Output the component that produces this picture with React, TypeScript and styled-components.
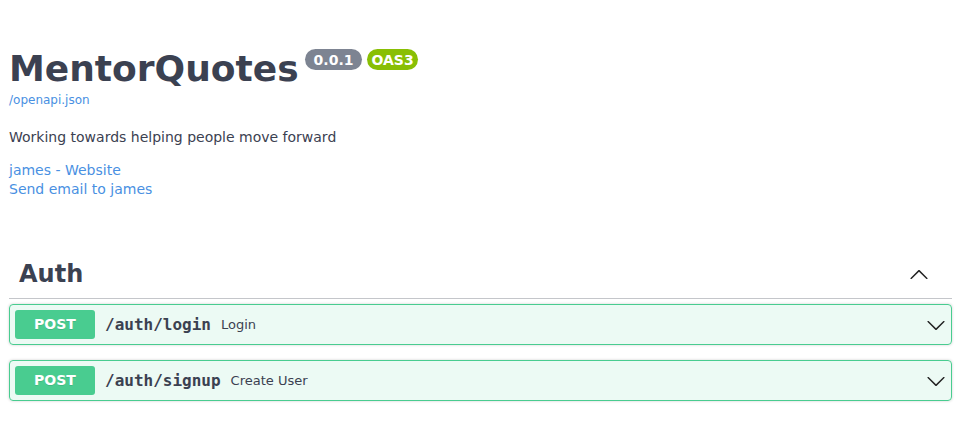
import React from "react";
import styled, { createGlobalStyle } from "styled-components";

const Global = createGlobalStyle`
  html, body { margin: 0; padding: 0; background: #fff; }
  body { font-family: "DejaVu Sans", sans-serif; color: #3b4151; }
  * { box-sizing: border-box; }
`;

const Page = styled.div`
  padding: 0 9px;
`;

const Info = styled.div`
  margin: 48px 0 51px;
`;

const TitleRow = styled.div`
  display: flex;
  align-items: flex-start;
  gap: 5px;
`;

const Title = styled.h2`
  margin: 0 1px 0 0;
  font-size: 36px;
  line-height: 42px;
  font-weight: 700;
  color: #3b4151;
`;

const Badge = styled.span<{ $bg: string; $pad: number }>`
  display: inline-flex;
  align-items: center;
  height: 21px;
  margin-top: 1px;
  padding: 0 ${(p) => p.$pad}px;
  border-radius: 11px;
  background: ${(p) => p.$bg};
  color: #fff;
  font-size: 14px;
  font-weight: 700;
`;

const UrlLink = styled.a`
  display: block;
  margin-top: 3px;
  font-size: 12px;
  line-height: 14px;
  color: #4990e2;
  text-decoration: none;
`;

const Description = styled.p`
  margin: 22px 0 0;
  font-size: 14px;
  line-height: 16px;
  color: #3b4151;
`;

const Contact = styled.div`
  margin-top: 16px;
`;

const ContactLink = styled.a`
  display: block;
  font-size: 14px;
  line-height: 19px;
  color: #4990e2;
  text-decoration: none;
`;

const TagHeader = styled.div`
  display: flex;
  align-items: center;
  justify-content: space-between;
  padding: 10px 23px 10px 10px;
  margin-bottom: 5px;
  border-bottom: 1px solid rgba(59, 65, 81, 0.3);
`;

const TagTitle = styled.h3`
  margin: 0;
  font-size: 24px;
  line-height: 28px;
  font-weight: 700;
  color: #3b4151;
`;

const OpBlock = styled.div`
  margin-bottom: 15px;
  border: 1px solid #49cc90;
  border-radius: 4px;
  background: rgba(73, 204, 144, 0.1);
  box-shadow: 0 0 3px rgba(0, 0, 0, 0.19);
`;

const Summary = styled.div`
  display: flex;
  align-items: center;
  padding: 5px;
`;

const Method = styled.span`
  min-width: 80px;
  padding: 6px 0;
  line-height: 17px;
  text-align: center;
  font-size: 14px;
  font-weight: 700;
  color: #fff;
  background: #49cc90;
  border-radius: 3px;
  text-shadow: 0 1px 0 rgba(0, 0, 0, 0.1);
`;

const Path = styled.span`
  padding: 0 10px;
  font-family: "DejaVu Sans Mono", monospace;
  font-size: 16px;
  font-weight: 700;
  color: #3b4151;
`;

const Desc = styled.span`
  flex: 1;
  font-size: 13px;
  color: #3b4151;
`;

const Arrow = styled.svg`
  width: 20px;
  height: 20px;
  flex: none;
  fill: #222;
`;

const ChevronDown = () => (
  <Arrow viewBox="0 0 20 20">
    <path d="M17.418 6.109c.272-.268.709-.268.979 0s.271.701 0 .969l-7.908 7.83c-.27.268-.707.268-.979 0l-7.908-7.83c-.27-.268-.27-.701 0-.969.271-.268.709-.268.979 0L10 13.25l7.418-7.141z" />
  </Arrow>
);

const ChevronUp = () => (
  <Arrow viewBox="0 0 20 20">
    <path d="M17.418 14.908c.272.268.709.268.979 0s.271-.701 0-.969l-7.908-7.83c-.27-.268-.707-.268-.979 0l-7.908 7.83c-.27.268-.27.701 0 .969.271.268.709.268.979 0L10 7.767l7.418 7.141z" />
  </Arrow>
);

const ops = [
  { path: "/auth/login", summary: "Login" },
  { path: "/auth/signup", summary: "Create User" },
];

export default function App() {
  return (
    <Page>
      <Global />
      <Info>
        <TitleRow>
          <Title>MentorQuotes</Title>
          <Badge $bg="#7d8492" $pad={9}>0.0.1</Badge>
          <Badge $bg="#89bf04" $pad={4}>OAS3</Badge>
        </TitleRow>
        <UrlLink href="#">/openapi.json</UrlLink>
        <Description>Working towards helping people move forward</Description>
        <Contact>
          <ContactLink href="#">james - Website</ContactLink>
          <ContactLink href="#">Send email to james</ContactLink>
        </Contact>
      </Info>
      <section>
        <TagHeader>
          <TagTitle>Auth</TagTitle>
          <ChevronUp />
        </TagHeader>
        {ops.map((op) => (
          <OpBlock key={op.path}>
            <Summary>
              <Method>POST</Method>
              <Path>{op.path}</Path>
              <Desc>{op.summary}</Desc>
              <ChevronDown />
            </Summary>
          </OpBlock>
        ))}
      </section>
    </Page>
  );
}
